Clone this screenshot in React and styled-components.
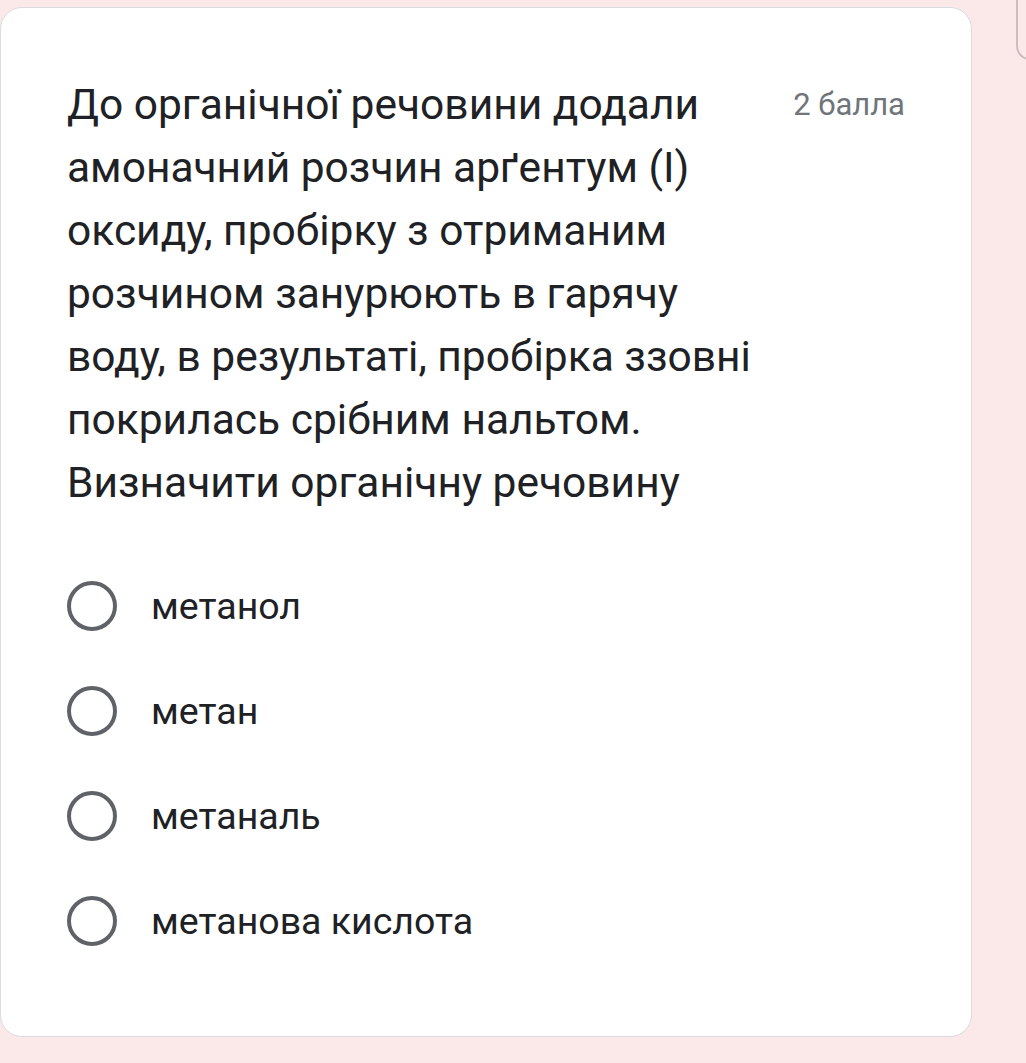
import React from "react";
import styled, { createGlobalStyle } from "styled-components";

const GlobalStyle = createGlobalStyle`
  body {
    margin: 0;
    background: #fbe8e8;
    font-family: Roboto, "Noto Sans", sans-serif;
  }
`;

const Page = styled.div`
  position: relative;
  display: flex;
  width: 1026px;
  height: 1063px;
  padding-top: 7px;
  box-sizing: border-box;
  overflow: hidden;
`;

const Card = styled.section`
  width: 972px;
  height: 1030px;
  box-sizing: border-box;
  background: #fff;
  border: 1px solid #dadce0;
  border-radius: 22px;
  padding: 65px 65px 0 66px;
`;

const Header = styled.div`
  display: flex;
  justify-content: space-between;
  align-items: flex-start;
`;

const Question = styled.h2`
  margin: 0;
  font-family: Roboto, "Noto Sans", sans-serif;
  font-weight: 400;
  font-size: 42.5px;
  line-height: 63px;
  color: #202124;
  white-space: pre-line;
`;

const Points = styled.span`
  font-size: 31px;
  line-height: 63px;
  color: #70757a;
  white-space: nowrap;
  margin-right: 1px;
`;

const Options = styled.ul`
  list-style: none;
  margin: 39px 0 0;
  padding: 0;
  display: flex;
  flex-direction: column;
`;

const Option = styled.li`
  display: flex;
  align-items: center;
  height: 105px;
  gap: 34px;
  font-size: 37.5px;
  color: #202124;
`;

const Radio = styled.span`
  width: 50px;
  height: 50px;
  box-sizing: border-box;
  border: 4px solid #5f6368;
  border-radius: 50%;
  flex-shrink: 0;
`;

const Corner = styled.div`
  position: absolute;
  top: -10px;
  left: 1016px;
  width: 40px;
  height: 68px;
  border-left: 2px solid #c9bfc0;
  border-bottom: 2px solid #c9bfc0;
  border-bottom-left-radius: 14px;
  background: #fbe8e8;
`;

const questionText = `До органічної речовини додали
амоначний розчин арґентум (І)
оксиду, пробірку з отриманим
розчином занурюють в гарячу
воду, в результаті, пробірка ззовні
покрилась срібним нальтом.
Визначити органічну речовину`;

const answers = ["метанол", "метан", "метаналь", "метанова кислота"];

export default function App() {
  return (
    <Page>
      <GlobalStyle />
      <Card>
        <Header>
          <Question>{questionText}</Question>
          <Points>2 балла</Points>
        </Header>
        <Options>
          {answers.map((a) => (
            <Option key={a}>
              <Radio />
              {a}
            </Option>
          ))}
        </Options>
      </Card>
      <Corner />
    </Page>
  );
}
